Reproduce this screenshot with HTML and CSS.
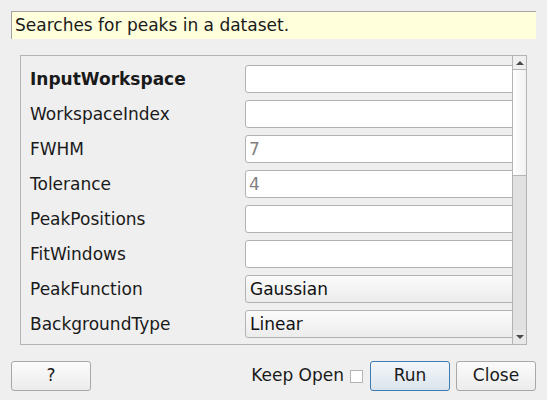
FILE: index.html
```html
<!DOCTYPE html>
<html>
<head>
<meta charset="utf-8">
<link rel="stylesheet" href="styles.css">
</head>
<body>
<div class="dialog">
  <div class="desc">Searches for peaks in a dataset.</div>
  <div class="frame">
    <div class="content">
      <div class="props">
        <div class="label bold">InputWorkspace</div><div class="field"></div>
        <div class="label">WorkspaceIndex</div><div class="field"></div>
        <div class="label">FWHM</div><div class="field placeholder">7</div>
        <div class="label">Tolerance</div><div class="field placeholder">4</div>
        <div class="label">PeakPositions</div><div class="field"></div>
        <div class="label">FitWindows</div><div class="field"></div>
        <div class="label">PeakFunction</div><div class="combo">Gaussian</div>
        <div class="label">BackgroundType</div><div class="combo">Linear</div>
      </div>
    </div>
    <div class="scrollbar">
      <div class="sb-btn up"><svg width="8" height="5" viewBox="0 0 8 5"><path d="M0 5 L4 1 L8 5 Z" fill="#4a4a4a"/></svg></div>
      <div class="sb-handle"></div>
      <div class="sb-trough"></div>
      <div class="sb-btn down"><svg width="8" height="5" viewBox="0 0 8 5"><path d="M0 0 L4 4 L8 0 Z" fill="#4a4a4a"/></svg></div>
    </div>
  </div>
  <div class="buttons">
    <button class="btn">?</button>
    <div class="spacer"></div>
    <span class="keep">Keep Open</span>
    <span class="check"></span>
    <button class="btn default">Run</button>
    <button class="btn">Close</button>
  </div>
</div>
</body>
</html>
```
FILE: styles.css
```css
html, body {
  margin: 0;
  padding: 0;
  background: #efefef;
}
body {
  font-family: "DejaVu Sans", sans-serif;
  font-size: 17px;
  color: #1a1a1a;
  width: 547px;
  height: 400px;
  overflow: hidden;
}
.dialog {
  display: flex;
  flex-direction: column;
  padding: 11px 11px 0 11px;
}
.desc {
  height: 28px;
  box-sizing: border-box;
  border-top: 1px solid #a3a3a3;
  border-left: 1px solid #a3a3a3;
  background: #ffffdc;
  padding: 3px 0 0 3px;
  line-height: 20px;
}
.frame {
  margin: 16px 9px 0 9px;
  height: 290px;
  box-sizing: border-box;
  border: 1px solid #b4b4b4;
  display: flex;
}
.content {
  flex: 1;
  overflow: hidden;
}
.props {
  display: grid;
  grid-template-columns: 215px 290px;
  grid-auto-rows: 28px;
  row-gap: 7px;
  padding: 9px 0 0 9px;
  align-items: center;
}
.label {
  line-height: 20px;
}
.bold {
  font-weight: bold;
}
.field, .combo {
  height: 28px;
  box-sizing: border-box;
  border: 1px solid #b2b2b2;
  border-radius: 3px;
  background: #ffffff;
  padding: 0 0 0 3px;
  line-height: 26px;
}
.placeholder {
  color: #7f7f7f;
}
.combo {
  background: linear-gradient(#fbfbfb, #ececec);
  padding-left: 4px;
  color: #111;
}
.scrollbar {
  width: 14px;
  box-sizing: border-box;
  border-left: 1px solid #b4b4b4;
  display: flex;
  flex-direction: column;
  background: #e1e1e1;
}
.sb-btn {
  height: 14px;
  flex: none;
  display: flex;
  align-items: center;
  justify-content: center;
  background: #efefef;
}
.sb-btn.up {
  border-bottom: 1px solid #b4b4b4;
  box-sizing: border-box;
}
.sb-btn.down {
  background: #e8e8e8;
}
.sb-handle {
  height: 106px;
  flex: none;
  box-sizing: border-box;
  border-bottom: 1px solid #b4b4b4;
  background: linear-gradient(to right, #ffffff, #f1f1f1);
}
.sb-trough {
  flex: 1;
  background: #e1e1e1;
}
.buttons {
  display: flex;
  align-items: center;
  margin-top: 16px;
  height: 30px;
}
.spacer {
  flex: 1;
}
.btn {
  width: 80px;
  height: 30px;
  box-sizing: border-box;
  border: 1px solid #a8a8a8;
  border-radius: 3px;
  background: linear-gradient(#fbfbfb, #ececec);
  font-family: "DejaVu Sans", sans-serif;
  font-size: 17px;
  line-height: 20px;
  color: #1a1a1a;
  padding: 0 0 3px 0;
  margin: 0;
}
.btn.default {
  border-color: #3a7cb4;
  background: linear-gradient(#f3f6f9, #dbe4ed);
  margin-right: 6px;
}
.keep {
  margin-right: 6px;
  padding-bottom: 3px;
}
.check {
  width: 13px;
  height: 13px;
  box-sizing: border-box;
  border: 1px solid #b4b4b4;
  background: #ffffff;
  margin-right: 7px;
}
```
